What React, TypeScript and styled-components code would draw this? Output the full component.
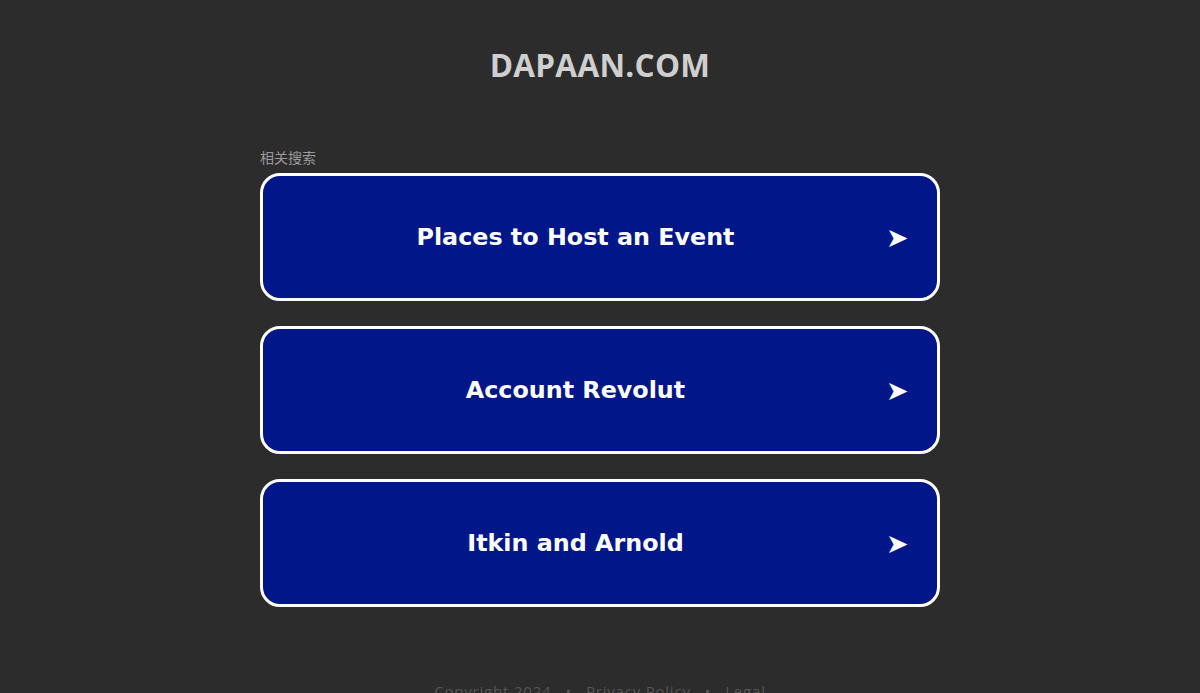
import React from "react";
import { styled, createGlobalStyle } from "styled-components";

const GlobalStyle = createGlobalStyle`
  html, body {
    margin: 0;
    padding: 0;
    background: #2c2c2c;
  }
`;

const Page = styled.div`
  display: flex;
  flex-direction: column;
  align-items: center;
  width: 100%;
  min-height: 100vh;
  background: #2c2c2c;
  font-family: "Open Sans", "Liberation Sans", sans-serif;
`;

const Header = styled.h1`
  margin: 0;
  padding: 44px 0 0;
  height: 106px;
  box-sizing: border-box;
  font-size: 31.5px;
  font-weight: 700;
  line-height: 42px;
  color: #cfcfcf;
  letter-spacing: 0.3px;
`;

const Content = styled.div`
  display: flex;
  flex-direction: column;
  width: 680px;
`;

const Label = styled.div`
  font-family: "Noto Sans CJK SC", sans-serif;
  font-size: 14px;
  line-height: 18px;
  color: #9a9a9a;
  padding-top: 42px;
  margin-bottom: 7px;
`;

const LinkList = styled.div`
  display: flex;
  flex-direction: column;
  gap: 25px;
`;

const LinkButton = styled.a`
  display: flex;
  align-items: center;
  height: 128px;
  box-sizing: border-box;
  border: 3.5px solid #ffffff;
  border-radius: 20px;
  background: #011689;
  color: #ffffff;
  text-decoration: none;
  cursor: pointer;
`;

const LinkText = styled.span`
  flex: 1;
  text-align: center;
  padding-left: 2px;
  font-family: "DejaVu Sans", Verdana, sans-serif;
  font-weight: 700;
  font-size: 23.8px;
`;

const Arrow = styled.span`
  width: 24px;
  margin-right: 27px;
  font-family: "DejaVu Sans", sans-serif;
  font-size: 27px;
  line-height: 1;
  color: #ffffff;
`;

const Footer = styled.div`
  display: flex;
  gap: 14px;
  margin-top: 74px;
  font-size: 15px;
  color: #555555;
  letter-spacing: 0.8px;
`;

const links = ["Places to Host an Event", "Account Revolut", "Itkin and Arnold"];

const App = () => {
  return (
    <Page>
      <GlobalStyle />
      <Header>DAPAAN.COM</Header>
      <Content>
        <Label>相关搜索</Label>
        <LinkList>
          {links.map((l) => (
            <LinkButton key={l}>
              <LinkText>{l}</LinkText>
              <Arrow>➤</Arrow>
            </LinkButton>
          ))}
        </LinkList>
      </Content>
      <Footer>
        <span>Copyright 2024</span>
        <span>•</span>
        <span>Privacy Policy</span>
        <span>•</span>
        <span>Legal</span>
      </Footer>
    </Page>
  );
};

export default App;
